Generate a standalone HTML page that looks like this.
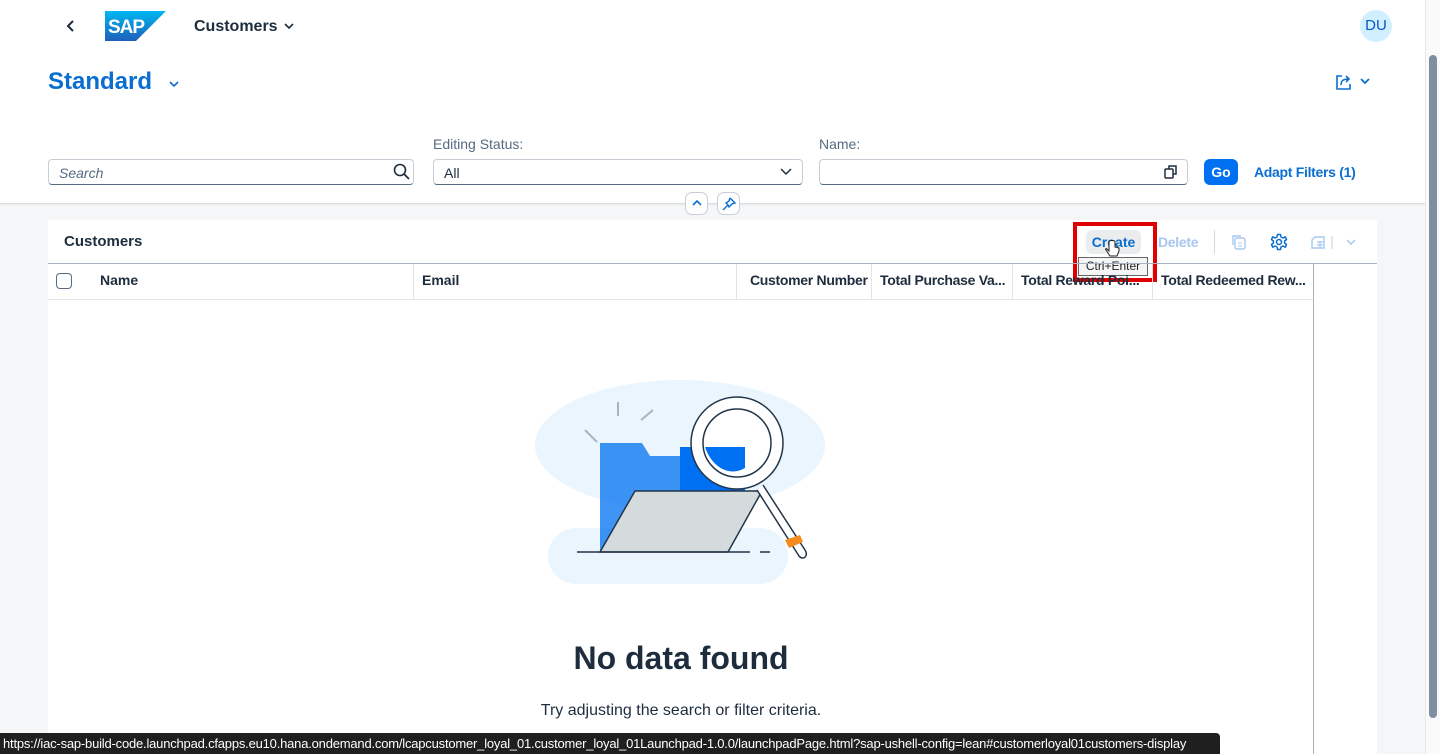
<!DOCTYPE html>
<html><head><meta charset="utf-8"><style>
*{box-sizing:border-box;margin:0;padding:0}
body{width:1440px;height:754px;overflow:hidden;background:#f5f6f7;font-family:"Liberation Sans",sans-serif;color:#1d2d3e;position:relative}
.abs{position:absolute}
.hdr{left:0;top:0;width:1425px;height:203px;background:#fff;box-shadow:0 1px 2px rgba(0,0,0,.15)}
.inp{height:26px;border:1px solid #c8ced5;border-bottom:1px solid #556b82;border-radius:4px;background:#fff;font-size:14px;padding:5px 10px}
.lbl{font-size:14px;color:#556b82}
.th{top:264px;height:36px;font-size:14px;font-weight:bold;line-height:33px;padding-left:8px;border-right:1px solid #e5e5e5;white-space:nowrap;overflow:hidden}
</style></head><body>
<div class="abs hdr"></div>
<svg class="abs" style="left:64px;top:19px" width="12" height="14"><path d="M9 2 4 7 9 12" stroke="#1d2d3e" stroke-width="2" fill="none"/></svg>
<svg class="abs" style="left:105px;top:11px" width="61" height="30"><defs><linearGradient id="g" x1="0" y1="0" x2="0" y2="1"><stop offset="0" stop-color="#00b8f1"/><stop offset="1" stop-color="#1e5fbb"/></linearGradient></defs><path d="M0 0H61L31 30H0Z" fill="url(#g)"/><text x="3" y="22" font-family="Liberation Sans" font-weight="bold" font-size="19" fill="#fff" letter-spacing="-1">SAP</text></svg>
<div class="abs" style="left:194px;top:18px;font-size:16px;font-weight:bold">Customers</div>
<svg class="abs" style="left:283px;top:21px" width="12" height="10"><path d="M2 3 6 7 10 3" stroke="#1d2d3e" stroke-width="1.6" fill="none"/></svg>
<div class="abs" style="left:1360px;top:10px;width:32px;height:32px;border-radius:50%;background:#d1efff;color:#0057d2;font-size:15px;text-align:center;line-height:32px">DU</div>
<div class="abs" style="left:48px;top:68px;font-size:24px;font-weight:bold;color:#0a6ed1">Standard</div>
<svg class="abs" style="left:168px;top:79px" width="12" height="10"><path d="M2 3 6 7 10 3" stroke="#0a6ed1" stroke-width="1.6" fill="none"/></svg>
<svg class="abs" style="left:1335px;top:73px" width="40" height="18"><path d="M7 3H2V16H15V11" stroke="#0a6ed1" stroke-width="1.6" fill="none" rx="2"/><path d="M6 12C6 7 9 6 14 6M11 3 14 6 11 9" stroke="#0a6ed1" stroke-width="1.6" fill="none"/><path d="M26 6 30 10 34 6" stroke="#0a6ed1" stroke-width="1.8" fill="none"/></svg>
<div class="abs lbl" style="left:433px;top:136px">Editing Status:</div>
<div class="abs lbl" style="left:819px;top:136px">Name:</div>
<div class="abs inp" style="left:48px;top:159px;width:366px;font-style:italic;color:#556b82">Search</div>
<svg class="abs" style="left:393px;top:163px" width="18" height="18"><circle cx="7" cy="7" r="5.5" stroke="#1d2d3e" stroke-width="1.6" fill="none"/><path d="M11 11 16 16" stroke="#1d2d3e" stroke-width="1.8"/></svg>
<div class="abs inp" style="left:433px;top:159px;width:370px">All</div>
<svg class="abs" style="left:779px;top:166px" width="14" height="12"><path d="M2 3 7 8 12 3" stroke="#1d2d3e" stroke-width="1.5" fill="none"/></svg>
<div class="abs inp" style="left:819px;top:159px;width:369px"></div>
<svg class="abs" style="left:1163px;top:164px" width="16" height="16"><rect x="2" y="5" width="8" height="9" rx="1" stroke="#1d2d3e" stroke-width="1.5" fill="none"/><path d="M6 5V2H13V10H10" stroke="#1d2d3e" stroke-width="1.5" fill="none"/></svg>
<div class="abs" style="left:1204px;top:159px;width:34px;height:26px;border-radius:6px;background:#0070f2;color:#fff;font-size:14px;font-weight:bold;text-align:center;line-height:26px">Go</div>
<div class="abs" style="left:1254px;top:164px;font-size:14px;font-weight:bold;color:#0a6ed1;letter-spacing:-0.3px">Adapt Filters (1)</div>
<div class="abs" style="left:685px;top:192px;width:23px;height:23px;border:1px solid #c8ced5;border-radius:7px;background:#fff"></div>
<svg class="abs" style="left:690px;top:197px" width="14" height="12"><path d="M3 8 7 4 11 8" stroke="#0a6ed1" stroke-width="1.6" fill="none"/></svg>
<div class="abs" style="left:717px;top:192px;width:23px;height:23px;border:1px solid #c8ced5;border-radius:7px;background:#fff"></div>
<svg class="abs" style="left:721px;top:196px" width="16" height="16"><path d="M9 2 14 7 11 8 8 11 7 9 2 14M7 9 5 7 8 5 9 2" stroke="#0a6ed1" stroke-width="1.4" fill="none"/></svg>
<div class="abs" style="left:48px;top:220px;width:1329px;height:534px;background:#fff"></div>
<div class="abs" style="left:64px;top:233px;font-size:15px;font-weight:bold">Customers</div>
<div class="abs" style="left:1086px;top:230px;width:55px;height:24px;border-radius:6px;background:#eaecee;font-size:14px;font-weight:bold;color:#0a6ed1;text-align:center;line-height:24px">Create</div>
<div class="abs" style="left:1158px;top:234px;font-size:14px;font-weight:bold;color:#a7c7ee;letter-spacing:-0.3px">Delete</div>
<div class="abs" style="left:1214px;top:230px;width:1px;height:24px;background:#d9d9d9"></div>
<svg class="abs" style="left:1230px;top:233px" width="18" height="18"><rect x="5" y="5" width="10" height="11" rx="2" stroke="#a7c7ee" stroke-width="1.4" fill="none"/><path d="M3 12V3H11" stroke="#a7c7ee" stroke-width="1.4" fill="none"/><path d="M8 10H12M8 13H12" stroke="#a7c7ee" stroke-width="1"/></svg>
<svg class="abs" style="left:1270px;top:233px" width="18" height="18"><path d="M7.5 1.5H10.5L11 4 13 5 15.3 3.8 16.5 6.5 14.6 8V10L16.5 11.5 15.3 14.2 13 13 11 14 10.5 16.5H7.5L7 14 5 13 2.7 14.2 1.5 11.5 3.4 10V8L1.5 6.5 2.7 3.8 5 5 7 4Z" stroke="#0a6ed1" stroke-width="1.5" fill="none" stroke-linejoin="round"/><circle cx="9" cy="9" r="2.5" stroke="#0a6ed1" stroke-width="1.5" fill="none"/></svg>
<svg class="abs" style="left:1310px;top:233px" width="50" height="18"><path d="M5 4H14V15H2V7Z" stroke="#a7c7ee" stroke-width="1.4" fill="none"/><path d="M7 9H13M7 12H13M10 8V15" stroke="#a7c7ee" stroke-width="1.2"/><path d="M22 3V16" stroke="#c8ced5"/><path d="M37 7 41 11 45 7" stroke="#a7c7ee" stroke-width="1.5" fill="none"/></svg>
<div class="abs" style="left:1073px;top:222px;width:84px;height:60px;border:4px solid #e00000"></div>
<div class="abs" style="left:1078px;top:257px;width:70px;height:19px;border:1px solid #666;background:#f5f5f5;font-size:12px;text-align:center;line-height:17px;color:#222">Ctrl+Enter</div>
<svg class="abs" style="left:1104px;top:239px" width="18" height="20"><path d="M5 3V12L3 10C2 9 1 10 2 11L6 17H13L15 12V9L11 8V3C11 1 5 1 5 3" fill="#fff" stroke="#222" stroke-width="1"/></svg>
<div class="abs" style="left:48px;top:263px;width:1329px;height:1px;background:#a8b2bd"></div>
<div class="abs" style="left:48px;top:299px;width:1265px;height:1px;background:#e5e5e5"></div>
<div class="abs" style="left:56px;top:273px;width:16px;height:16px;border:1.5px solid #556b82;border-radius:4px"></div>
<div class="abs th" style="left:92px;width:322px">Name</div>
<div class="abs th" style="left:414px;width:323px">Email</div>
<div class="abs th" style="left:737px;width:135px;padding-left:13px;letter-spacing:-0.3px">Customer Number</div>
<div class="abs th" style="left:872px;width:141px;letter-spacing:-0.3px">Total Purchase Va...</div>
<div class="abs th" style="left:1013px;width:140px;letter-spacing:-0.3px">Total Reward Poi...</div>
<div class="abs th" style="left:1153px;width:161px;border-right:1px solid #a8b2bd;letter-spacing:-0.3px">Total Redeemed Rew...</div>
<div class="abs" style="left:1313px;top:299px;width:1px;height:455px;background:#a8b2bd"></div>
<svg class="abs" style="left:520px;top:370px" width="320" height="220">
<ellipse cx="160" cy="75" rx="145" ry="65" fill="#ebf5fe"/>
<rect x="28" y="158" width="240" height="56" rx="28" fill="#ebf5fe"/>
<path d="M65 60 77 72M98 32V46M121 50 133 40" stroke="#a9b4be" stroke-width="2"/>
<path d="M80 73H122L130 86H190V182H80Z" fill="#0070f2" opacity=".75"/>
<path d="M160 77H225V122H160Z" fill="#0070f2"/>
<path d="M115 121H242L208 182H80Z" fill="#d5dadd" stroke="#223548" stroke-width="1.5"/>
<path d="M57 182H230M240 182H250" stroke="#223548" stroke-width="1.5"/>
<path d="M243 115 285 180C289 186 283 191 279 186L237 120" fill="#fff" stroke="#223548" stroke-width="1.5"/>
<path d="M265 170 280 165 283 172 269 178Z" fill="#f58b1f"/>
<circle cx="217" cy="73" r="46" fill="#fff" stroke="#223548" stroke-width="1.5"/>
<circle cx="217" cy="73" r="34" fill="none" stroke="#223548" stroke-width="1.5"/>
<path d="M185 77H225V98C210 107 192 98 185 77Z" fill="#0070f2"/>
</svg>
<div class="abs" style="left:0;top:640px;width:1362px;text-align:center;font-size:32px;font-weight:bold">No data found</div>
<div class="abs" style="left:0;top:702px;width:1362px;text-align:center;font-size:16px">Try adjusting the search or filter criteria.</div>
<div class="abs" style="left:1425px;top:0;width:15px;height:754px;background:#fafafa;border-left:1px solid #e8e8e8"></div>
<div class="abs" style="left:1429px;top:55px;width:8px;height:663px;border-radius:4px;background:#7f8ea3"></div>
<div class="abs" style="left:0;top:733px;width:1220px;height:21px;background:#1f1f1f;border-top-right-radius:4px;color:#fff;font-size:13px;line-height:21px;padding-left:3px;white-space:nowrap;overflow:hidden;letter-spacing:-0.2px">https://iac-sap-build-code.launchpad.cfapps.eu10.hana.ondemand.com/lcapcustomer_loyal_01.customer_loyal_01Launchpad-1.0.0/launchpadPage.html?sap-ushell-config=lean#customerloyal01customers-display</div>
</body></html>
